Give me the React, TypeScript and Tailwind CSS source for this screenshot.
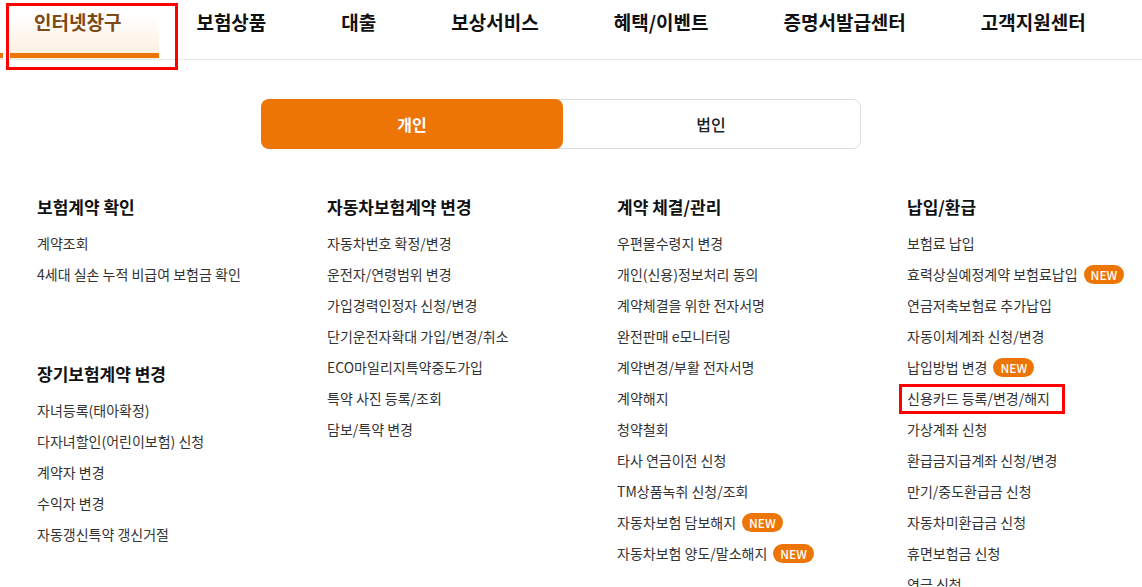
import React from 'react';

const navItems = ['보험상품', '대출', '보상서비스', '혜택/이벤트', '증명서발급센터', '고객지원센터'];

type Item = { label: string; isNew?: boolean; marked?: boolean };
type Group = { title: string; items: Item[] };

const columns: Group[][] = [
  [
    { title: '보험계약 확인', items: [{ label: '계약조회' }, { label: '4세대 실손 누적 비급여 보험금 확인' }] },
    {
      title: '장기보험계약 변경',
      items: [
        { label: '자녀등록(태아확정)' },
        { label: '다자녀할인(어린이보험) 신청' },
        { label: '계약자 변경' },
        { label: '수익자 변경' },
        { label: '자동갱신특약 갱신거절' },
      ],
    },
  ],
  [
    {
      title: '자동차보험계약 변경',
      items: [
        { label: '자동차번호 확정/변경' },
        { label: '운전자/연령범위 변경' },
        { label: '가입경력인정자 신청/변경' },
        { label: '단기운전자확대 가입/변경/취소' },
        { label: 'ECO마일리지특약중도가입' },
        { label: '특약 사진 등록/조회' },
        { label: '담보/특약 변경' },
      ],
    },
  ],
  [
    {
      title: '계약 체결/관리',
      items: [
        { label: '우편물수령지 변경' },
        { label: '개인(신용)정보처리 동의' },
        { label: '계약체결을 위한 전자서명' },
        { label: '완전판매 e모니터링' },
        { label: '계약변경/부활 전자서명' },
        { label: '계약해지' },
        { label: '청약철회' },
        { label: '타사 연금이전 신청' },
        { label: 'TM상품녹취 신청/조회' },
        { label: '자동차보험 담보해지', isNew: true },
        { label: '자동차보험 양도/말소해지', isNew: true },
      ],
    },
  ],
  [
    {
      title: '납입/환급',
      items: [
        { label: '보험료 납입' },
        { label: '효력상실예정계약 보험료납입', isNew: true },
        { label: '연금저축보험료 추가납입' },
        { label: '자동이체계좌 신청/변경' },
        { label: '납입방법 변경', isNew: true },
        { label: '신용카드 등록/변경/해지', marked: true },
        { label: '가상계좌 신청' },
        { label: '환급금지급계좌 신청/변경' },
        { label: '만기/중도환급금 신청' },
        { label: '자동차미환급금 신청' },
        { label: '휴면보험금 신청' },
        { label: '연금 신청' },
      ],
    },
  ],
];

const NewBadge = () => (
  <span className="ml-[6px] inline-flex h-[19px] items-center rounded-full bg-[#ec7505] px-[7px] text-[12px] font-medium leading-none text-white">
    NEW
  </span>
);

export default function App() {
  return (
    <div
      className="h-[587px] w-[1142px] overflow-hidden bg-white"
      style={{ fontFamily: '"Noto Sans CJK KR", "Noto Sans", sans-serif' }}
    >
      {/* Top navigation */}
      <div className="relative h-[60px] border-b border-[#e8e8e8]">
        <div className="absolute left-0 top-[53px] h-[5px] w-[3px] bg-[#ec7505]" />
        <nav className="flex h-[59px] items-start gap-[75px] pl-[34px]">
          <div className="relative h-[59px]">
            <div className="absolute -left-[24px] top-[14px] h-[45px] w-[149px] rounded-t-[20px] bg-gradient-to-b from-white to-[#fdeedd]" />
            <div className="absolute -left-[24px] top-[53px] h-[5px] w-[149px] bg-[#ec7505]" />
            <span className="relative block pt-[8px] text-[19px] font-bold leading-[28px] text-[#7d4a12]">
              인터넷창구
            </span>
          </div>
          {navItems.map((n) => (
            <span key={n} className="block pt-[8px] text-[19px] font-bold leading-[28px] text-[#111]">
              {n}
            </span>
          ))}
        </nav>
        <div className="pointer-events-none absolute left-[6px] top-[3px] h-[67px] w-[172px] border-[3px] border-[#ff0000]" />
      </div>

      {/* Personal / corporate toggle */}
      <div className="ml-[261px] mt-[39px] flex h-[50px] w-[600px] rounded-[8px] border border-[#dddddd]">
        <button className="-m-px flex h-[50px] w-[302px] items-center justify-center rounded-[8px] bg-[#ec7505] text-[16px] font-bold text-white">
          개인
        </button>
        <button className="flex flex-1 items-center justify-center text-[16px] font-medium text-[#222]">
          법인
        </button>
      </div>

      {/* Menu columns */}
      <div className="mt-[46px] grid grid-cols-[290px_290px_290px_290px] pl-[37px]">
        {columns.map((groups, ci) => (
          <div key={ci} className="flex flex-col gap-[72px]">
            {groups.map((g) => (
              <div key={g.title}>
                <h3 className="mb-[9px] text-[17px] font-bold leading-[24px] text-[#111]">{g.title}</h3>
                <ul>
                  {g.items.map((it) => (
                    <li key={it.label} className="flex h-[31px] items-center text-[14px] text-[#333]">
                      <span className={it.marked ? 'relative' : ''}>
                        {it.label}
                        {it.marked && (
                          <span className="pointer-events-none absolute -left-[8px] -top-[4px] h-[30px] w-[166px] border-[3px] border-[#ff0000]" />
                        )}
                      </span>
                      {it.isNew && <NewBadge />}
                    </li>
                  ))}
                </ul>
              </div>
            ))}
          </div>
        ))}
      </div>
    </div>
  );
}
